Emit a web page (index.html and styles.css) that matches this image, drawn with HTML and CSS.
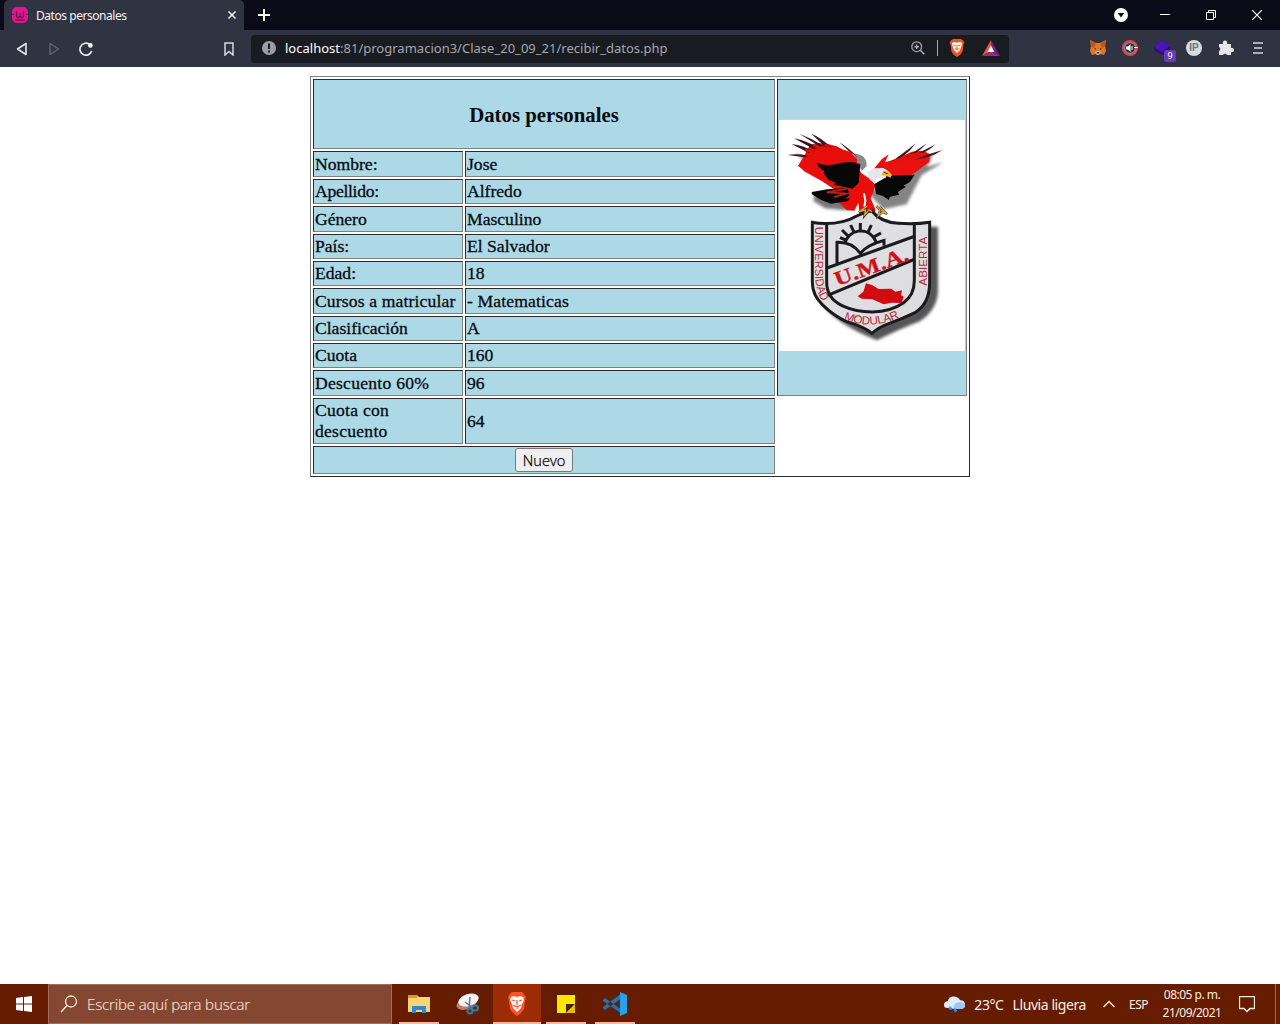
FILE: index.html
```
<!DOCTYPE html>
<html lang="es">
<head>
<meta charset="utf-8">
<title>Datos personales</title>
<link rel="stylesheet" href="styles.css">
</head>
<body>
<header class="tabs">
  <div class="tab">
    <svg width="16" height="16" viewBox="0 0 16 16"><rect width="16" height="16" rx="5" fill="#e4148c"/><path d="M0 7.500h2M14 7.500h2" stroke="#303341"/><path d="M4.500 4v5q0 1.500 1.500 1.500T8 9V6v3q.500 1.500 2 1.500t1.500-1.500V4M3.500 13h9" fill="none" stroke="#5c1750" stroke-width="1.300"/></svg>
    <span class="tab-title">Datos personales</span>
    <svg class="tab-close" width="10" height="10" viewBox="0 0 10 10"><path d="M1.500 1.500l7 7M8.500 1.500l-7 7" stroke="#fff" stroke-width="1.500"/></svg>
  </div>
  <svg class="new-tab" width="12" height="12" viewBox="0 0 12 12"><path d="M6 0v12M0 6h12" stroke="#fff" stroke-width="2"/></svg>
  <div class="window-controls">
    <svg width="14" height="14" viewBox="0 0 14 14"><circle cx="7" cy="7" r="7" fill="#fff"/><path d="M3.800 5h6.400L7 9.500z" fill="#0a0b16"/></svg>
    <svg width="10" height="10" viewBox="0 0 10 10"><path d="M0 4.500h10" stroke="#fff"/></svg>
    <svg width="10" height="10" viewBox="0 0 10 10"><path d="M.5 2.500h7v7h-7zM2.500 2.500v-2h7v7h-2" fill="none" stroke="#fff"/></svg>
    <svg width="10" height="10" viewBox="0 0 10 10"><path d="M0 0l10 10M10 0L0 10" stroke="#fff" stroke-width="1.200"/></svg>
  </div>
</header>
<nav class="toolbar">
  <svg class="back" width="12" height="14" viewBox="0 0 12 14"><path d="M10 1.500v11L1.500 7z" fill="none" stroke="#e4e5ea" stroke-width="1.600" stroke-linejoin="round"/></svg>
  <svg class="forward" width="12" height="14" viewBox="0 0 12 14"><path d="M2 1.500v11L10.500 7z" fill="none" stroke="#62656f" stroke-width="1.400" stroke-linejoin="round"/></svg>
  <svg class="reload" width="14" height="14" viewBox="0 0 14 14"><path d="M10 2a6 6 0 1 0 2.700 7" fill="none" stroke="#e4e5ea" stroke-width="1.700"/><circle cx="11.400" cy="3.400" r="2.300" fill="#fff"/></svg>
  <svg class="bookmark" width="10" height="14" viewBox="0 0 10 14"><path d="M1 1h8v12L5 9.500 1 13z" fill="none" stroke="#d7d8dd" stroke-width="1.500"/></svg>
  <div class="address">
    <svg width="14" height="14" viewBox="0 0 14 14"><circle cx="7" cy="7" r="7" fill="#9b9da4"/><path d="M7 2.500v5.500M7 9.500v2" stroke="#181b20" stroke-width="2"/></svg>
    <span class="url"><b>localhost</b>:81/programacion3/Clase_20_09_21/recibir_datos.php</span>
    <svg class="magnify" width="14" height="14" viewBox="0 0 14 14"><circle cx="5.700" cy="5.700" r="4.900" fill="none" stroke="#9ea0a5" stroke-width="1.300"/><path d="M9.300 9.300l4 4M3.500 5.700h4.400M5.700 3.500v4.400" stroke="#b0b1b6" stroke-width="1.400"/></svg>
    <i class="divider"></i>
    <svg class="shield" width="16" height="18" viewBox="0 0 16 18"><path d="M4 0h8l2 1.500 1.500 2-1 2-1 7-2 3L8 18l-3.500-2.500-2-3-1-7-1-2L2 1.500z" fill="#f05423"/><path d="M3 4l2-1 3 .7L11 3l2 1-.5 3-1.500 4-3 3-3-3-1.500-4z" fill="#fff"/><path d="M4.500 6l2.300.8M11.500 6l-2.300.8M8 6v4M5.500 9L8 11l2.500-2" stroke="#f05423" fill="none"/></svg>
    <svg class="bat" width="18" height="16" viewBox="0 0 18 16"><path d="M9 0L0 16l9-5z" fill="#f1543a"/><path d="M9 0l9 16-9-5z" fill="#652785"/><path d="M0 16h18l-9-5z" fill="#a62677"/><path d="M9 5.500L5.500 12h7z" fill="#fff"/></svg>
  </div>
  <div class="extensions">
    <svg width="16" height="16" viewBox="0 0 16 16"><path d="M0 0l6 3h4l6-3-1 6 1 5-2 4-4-1-1 1H7l-1-1-4 1-2-4 1-5z" fill="#dd7828"/><path d="M0 0l6 3-2 5-3-2zM16 0l-6 3 2 5 3-2z" fill="#bd561f"/><path d="M5 12l2-1h2l2 1-2 3H7z" fill="#d4c0ad"/><path d="M4 8l2 .500V10zM12 8l-2 .500V10zM7 12h2l.500 1.500h-3z" fill="#2a2930"/></svg>
    <svg width="16" height="16" viewBox="0 0 16 16"><circle cx="8" cy="8" r="7" fill="#888" stroke="#dc4450" stroke-width="2"/><circle cx="8" cy="8" r="4.800" fill="#32323a"/><path d="M4 6.500h2L8.500 4v8L6 9.500H4z" fill="#fff"/><path d="M10 6v4M12 7.500h4" stroke="#fff"/></svg>
    <div class="gem"><svg width="16" height="16" viewBox="0 0 16 16"><path d="M0 7l8-7 8 6v6l-8 3-8-5z" fill="#281371"/><path d="M0 7l8-7 8 6-8 6z" fill="#4815b8"/></svg><span class="badge">9</span></div>
    <div class="ip">IP</div>
    <svg width="16" height="16" viewBox="0 0 16 16"><path d="M1 4h4a2.300 2.300 0 1 1 4 0h4v4a2.200 2.200 0 1 1 0 4v3H9a2.200 2.200 0 0 0-4 0H1v-4a2.200 2.200 0 0 0 0-4z" fill="#e5e5ea"/></svg>
    <svg class="menu" width="12" height="12" viewBox="0 0 12 12"><path d="M1 1h10M2 6h8M1 11h10" stroke="#d3d4da" stroke-width="1.600"/></svg>
  </div>
</nav>
<main>
<table class="record">
  <colgroup><col class="label"><col class="value"><col class="crest-col"></colgroup>
  <tr class="heading"><th colspan="2"><span>Datos personales</span></th>
    <td class="crest" rowspan="10">
<svg width="188" height="234" viewBox="778 118 188 234">
  <defs>
    <filter id="soft" x="-20%" y="-20%" width="140%" height="140%"><feGaussianBlur stdDeviation="5"/></filter>
    <linearGradient id="metal" x2="1" y2="1"><stop stop-color="#e1e1e4"/><stop offset="1" stop-color="#dcdcdf"/></linearGradient>
    <path id="abierta" d="M457 227V72"/><path id="modular" d="M206 328Q292 364 385 317"/><path id="universidad" d="M120 50V185Q120 240 143 277"/>
  </defs>
  <path d="M778 119h188v232H778z" fill="#fff"/><path d="M778 119.500h188" stroke="#c9d3d6"/><path d="M778.500 119v232M965.500 119v232" stroke="#a4d5d8"/>
  <g transform="translate(775 75) scale(.33333)">
    <path d="M60 233l45 40 80 60 80 5 60 65 70-15 45-88 65-38-50 13 22-40-85 50-90 60z" fill="#555" opacity=".72" filter="url(#soft)"/>
    <path d="M118 358l-3 20 35 22 62 6 25-10-8-40z" fill="#777" filter="url(#soft)"/>
    <path d="M235 235q42 5 40 38l-15 15z" fill="#8a8a8e"/>
    <path d="M86 245L105 210l20-6 30 2 30 8 17 9 25 8 19 22 3 26 10 15 29 20 14 17-8 22-7 17 15 35-12 22-17 3-20-21-3-26-12 24-23-1-23-24-2-31-50-33-50-28-21-18z" fill="#e90e0b"/>
    <path d="M125 263q30 12 61 3 30-8 57-3l13 5-5 56-18 17-24-5-31-6 2-8-20-7-14-20 3-5-17-13zM110 351l47-8 61-4 5 22-13 10 15-2-7 10-50 7-31-12-26-16z" fill="#080708"/>
    <path d="M218 341l-63 11 57 3-35 11 47-12" stroke="#b9201c" stroke-width="5" fill="none"/>
    <path d="M296 282l24-29 21-15-11 24 35-11 45-21 30-3 25 10-2 24-20 14-23 18-24 12-64 8-24-13z" fill="#ea100d"/>
    <path d="M298 327l43-25 78-3-14 22-20 11 8 3-24 16 3 8-27 6-4 10-17-12-21-6z" fill="#090808"/>
    <path d="M38 240q30-5 60 2l-8 5zM50 207q35 4 65 22l-15 4zM57 190q45 10 75 30l-15 3zM73 176q40 15 75 38h-15zM109 176q30 12 62 43h-17zM193 202q30 18 55 45l-27-19zM352 258q40-10 70-53-22 19-70 53zM375 256q50-15 80-51-30 23-80 51zM395 254q55-15 87-46-40 20-87 46zM418 254q50-5 84-29-45 13-84 29z" fill="#3d141b"/>
    <path d="M95 242l60-3M90 225l65 15M115 210l50 30M150 208l30 30M360 256l70-15M400 240l55-5" stroke="#e90e0b" stroke-width="7"/>
    <path d="M276 293l20-13 29-1 15 9-9 22-26-2-5 15-15-8z" fill="#e7e7ed"/>
    <path d="M326 287l15 1 10 12-5 8-12-6-15-1z" fill="#efb440"/><path d="M326 292l12 4" stroke="#3b2924" stroke-width="3"/>
    <path d="M267 355l4 22-3 18" stroke="#fff" stroke-width="6" fill="none"/>
  </g>
  <g transform="translate(775 210) scale(.33333)">
    <path d="M160 65l-22 212Q182 343 306 391Q390 350 435 334Q490 296 489 238V50H430z" fill="#555" filter="url(#soft)"/>
    <path d="M108 37Q190 50 245 18Q278 3 291 3Q315 36 370 40Q420 44 464 37V217Q464 281 420 308Q385 325 343 340Q310 352 291 370Q267 350 215 335Q176 318 142 284Q112 255 112 217V37z" fill="url(#metal)" stroke="#1b1b1d" stroke-width="9"/>
    <path d="M155 43V217Q155 265 201 287Q241 306 292 306Q349 304 386 278Q418 256 418 211V43" fill="none" stroke="#1b1b1d" stroke-width="9"/>
    <path d="M156 174L421 78M158 256L420 147" stroke="#1b1b1d" stroke-width="9"/>
    <path d="M186 160V97Q230 95 256 130Q275 105 327 91v16M209 103C216 60 280 43 303 95M195 83l22 9M201 60l20 20M227 45l10 22M256 39v24M289 45l-9 20M318 69l-20 11" fill="none" stroke="#1b1b1d" stroke-width="9"/>
    <path d="M248 259l17-14 8-25 18 5 20 12 38-1 12 9 20-4-3 14 8 5-6 19-30-1-24 5-34-15-32-2z" fill="#d10b10"/>
    <text transform="translate(187 229) rotate(-20)" class="uma" textLength="232" lengthAdjust="spacingAndGlyphs">U.M.A.</text>
    <text class="motto"><textPath href="#universidad" textLength="228" lengthAdjust="spacingAndGlyphs">UNIVERSIDAD</textPath></text>
    <text class="motto"><textPath href="#modular" textLength="172">MODULAR</textPath></text>
    <text class="motto"><textPath href="#abierta" textLength="147">ABIERTA</textPath></text>
  </g>
  <g transform="translate(775 75) scale(.33333)">
    <path d="M276 395l-24 16 20-5-3 15 14-16 8 6M304 393l11 12-5 17 13-12 13 7-22-21" fill="none" stroke="#2d2319" stroke-width="7"/><path d="M276 394l-24 16 20-5-3 15 14-16 8 6M304 393l11 12-5 17 13-12 13 7-22-21" fill="none" stroke="#dca841" stroke-width="4"/>
  </g>
</svg></td></tr>
  <tr class="tall"><td>Nombre:</td><td>Jose</td></tr>
  <tr><td class="tight">Apellido:</td><td>Alfredo</td></tr>
  <tr class="tall"><td>Género</td><td>Masculino</td></tr>
  <tr><td>País:</td><td>El Salvador</td></tr>
  <tr><td>Edad:</td><td>18</td></tr>
  <tr class="tall"><td class="wide">Cursos a matricular</td><td class="wide">- Matematicas</td></tr>
  <tr><td>Clasificación</td><td>A</td></tr>
  <tr><td>Cuota</td><td>160</td></tr>
  <tr class="tall"><td class="wider">Descuento 60%</td><td>96</td></tr>
  <tr class="double"><td class="wider">Cuota con<br>descuento</td><td>64</td></tr>
  <tr class="action"><td colspan="2"><button>Nuevo</button></td></tr>
</table>
</main>
<footer class="taskbar">
  <svg class="start" width="16" height="16" viewBox="0 0 16 16"><path d="M0 2l7-1v6.500H0zM8 .900L16 0v7.500H8zM0 8.500h7V15l-7-1zM8 8.500h8V16l-8-1z" fill="#fff"/></svg>
  <div class="search"><svg width="18" height="18" viewBox="0 0 18 18"><circle cx="11" cy="6.500" r="5.500" fill="none" stroke="#fde4d8" stroke-width="1.300"/><path d="M7 10.500L1 17" stroke="#fde4d8" stroke-width="1.400"/></svg><span>Escribe aquí para buscar</span></div>
  <div class="apps">
    <div class="app running"><svg width="22" height="20" viewBox="0 0 22 20"><path d="M0 1h9l2 2h11v15H0z" fill="#f7d574"/><path d="M0 1h9l1 2-2 1H0z" fill="#d89a30"/><path d="M4 19v-7h14v7h-4v-3H8v3z" fill="#2c8ace"/></svg></div>
    <div class="app"><svg width="24" height="22" viewBox="0 0 24 22"><ellipse cx="11" cy="10" rx="11" ry="6" transform="rotate(-22 11 10)" fill="#c87872"/><ellipse cx="12.500" cy="7" rx="10.500" ry="6" transform="rotate(-18 12.500 7)" fill="#f4f4f6"/><path d="M14 4l-1 11M9 9l8 6" stroke="#657889" stroke-width="1.500"/><circle cx="14" cy="18" r="2.500" fill="none" stroke="#327fa6" stroke-width="2"/><ellipse cx="19" cy="15" rx="3" ry="2.500" fill="none" stroke="#327fa6" stroke-width="2"/></svg></div>
    <div class="app running active"><svg width="22" height="24" viewBox="0 0 22 24"><path d="M6 0h10l2 2 2 3-1 4-1 8-3 4-4 3-4-3-3-4-1-8-1-4 2-3z" fill="#fb542b"/><path d="M5 5l3-1 3 1 3-1 3 1 1 3-2 4-1 4-4 4-4-4-1-4-2-4z" fill="#fff"/><path d="M6 8l3 1M16 8l-3 1M11 8v5M7 13l4 2 4-2M11 15v2" stroke="#fb542b" stroke-width="1.300" fill="none"/></svg></div>
    <div class="app running note"><svg width="18" height="18" viewBox="0 0 18 18"><path d="M0 0h18v9L9 18H0z" fill="#ffe500"/><path d="M9 9h9l-9 9z" fill="#422516"/><path d="M18 9v9H9z" fill="#e9bd00"/></svg></div>
    <div class="app running"><svg width="24" height="24" viewBox="0 0 24 24"><path d="M0 8l2-2 17 12v4L0 9zM0 16l2 2L19 6V1L0 15z" fill="#1577c2"/><path d="M17 0l7 3v18l-7 3z" fill="#27a1eb"/></svg></div>
  </div>
  <div class="weather"><svg width="21" height="19" viewBox="0 0 22 19"><path d="M5 13Q0 14 0 10q0-4 4-4Q5 1 10 1t7 4q5 0 5 5 0 4-5 4H5z" fill="#dfedff"/><path d="M10 14q0-7 7-7 5 1 5 4t-5 3z" fill="#9bc8f4"/><path d="M6 11l-1 3q2 3 4 0zM11 13l-1 3q2 3 4 0z" fill="#278fdd"/></svg><span class="degrees">23°C</span><span class="rain">Lluvia ligera</span></div>
  <svg class="chevron" width="12" height="8" viewBox="0 0 12 8"><path d="M.5 7L6 1.500 11.500 7" fill="none" stroke="#ffe9df" stroke-width="1.400"/></svg>
  <span class="language">ESP</span>
  <div class="clock"><span>08:05 p. m.</span><span>21/09/2021</span></div>
  <svg class="notice" width="16" height="17" viewBox="0 0 16 17"><path d="M.5.500h15v12H11L8 15.500 5 12.500H.5z" fill="none" stroke="#fff0e7" stroke-width="1.300"/></svg>
  <i class="desktop"></i>
</footer>
</body>
</html>
```
FILE: styles.css
```
* { box-sizing: border-box; }
body { margin: 0; width: 1280px; height: 1024px; overflow: hidden; display: flex; flex-direction: column; background: #fff; font-family: "Noto Sans", sans-serif; }
svg { display: block; flex: none; }
span { white-space: nowrap; }

.tabs { height: 30px; flex: none; display: flex; align-items: center; padding-left: 4px; background: #0a0b16; }
.tab { width: 240px; height: 30px; display: flex; align-items: center; padding: 0 7px 0 8px; background: #303341; border-radius: 5px 5px 0 0; color: #f2f2f5; }
.tab-title { margin-left: 8px; font: 12px "Noto Sans", sans-serif; letter-spacing: -.45px; }
.tab-close { margin-left: auto; }
.new-tab { margin-left: 14px; }
.window-controls { margin-left: auto; display: flex; align-items: center; padding-right: 18px; gap: 36px; }
.window-controls svg:first-child { margin-right: -4px; }

.toolbar { height: 37px; flex: none; display: flex; align-items: center; background: #303341; padding: 0 16px; }
.forward { margin-left: 20px; }
.reload { margin-left: 19px; }
.bookmark { margin-left: 131px; }
.address { width: 758px; height: 28px; margin-left: 17px; display: flex; align-items: center; padding: 0 9px 1px 11px; background: #181b20; border-radius: 4px; }
.url { margin-left: 9px; color: #a5a7ad; font: 13px "Noto Sans", sans-serif; letter-spacing: .01px; }
.url b { color: #fff; font-weight: 400; }
.magnify { margin-left: auto; }
.divider { width: 1px; height: 16px; margin-left: 12px; background: #a7a8ad; }
.shield { margin-left: 11px; }
.bat { margin-left: 17px; }
.extensions { margin-left: auto; display: flex; align-items: center; gap: 16px; padding-bottom: 1px; }
.gem { position: relative; }
.badge { position: absolute; left: 10px; top: 10px; width: 12px; height: 12px; background: #6a39bd; border-radius: 2px; color: #fff; font: 9px/12px "Noto Sans", sans-serif; text-align: center; }
.ip { width: 16px; height: 16px; border-radius: 50%; background: #d9dcdf; color: #6b7279; font: bold 10px/16px "Liberation Sans", sans-serif; text-align: center; }
.menu { margin-left: 2px; }

main { flex: 1; padding-top: 9px; }
.record { width: 660px; table-layout: fixed; margin: 0 auto; border: 1px solid; border-color: #808080 #2b2b2b #2b2b2b #808080; border-spacing: 2px; font: 17.6px/21px "Liberation Serif", serif; color: #050b10; }
.label { width: 150px; }
.value { width: 310px; }
.crest-col { width: 190px; }
.record td, .record th { height: 25px; padding: 0 1px; background: #add8e6; border: 1px solid; border-color: #2b2b2b #808080 #808080 #2b2b2b; -webkit-text-stroke: .3px #050b10; }
.record .heading th { height: 70px; font-size: 20.8px; -webkit-text-stroke: 0; }
.record .tall td { height: 26px; }
.record .double td { height: 46px; }
.record .action td { height: 28px; text-align: center; }
.record .wide { letter-spacing: .14px; }
.record .wider { letter-spacing: .25px; }
.record .tight { letter-spacing: -.3px; }
.record .crest { padding: 0; vertical-align: middle; -webkit-text-stroke: 0; }
.crest svg { margin-top: -5px; }
.uma { font: bold 62px "Liberation Serif", serif; fill: #cf1219; stroke: #cf1219; stroke-width: 1px; }
.motto { font: 35px "Liberation Sans", sans-serif; fill: #b62b36; }
button { display: block; width: 58px; height: 24px; margin: 0 auto; padding: 0; border: 1px solid #777; border-radius: 3px; background: #efefef; color: #000; font: 300 14.6px/22px "Open Sans", sans-serif; -webkit-text-stroke: .25px #000; }

.taskbar { height: 40px; flex: none; display: flex; align-items: center; background: #651c00; color: #ffede4; }
.start { margin: 0 16px; }
.search { width: 344px; height: 40px; display: flex; align-items: center; padding-left: 11px; gap: 9px; background: #844832; border: 1px solid #a06b57; color: #fbdfd2; font: 300 15px "Open Sans", sans-serif; letter-spacing: -.12px; -webkit-text-stroke: .2px #fbdfd2; }
.apps { height: 40px; display: flex; margin-left: 2px; }
.app { width: 49px; height: 40px; display: flex; align-items: center; justify-content: center; background: linear-gradient(#ffb59d, #ffb59d) center bottom / 0 2px no-repeat; }
.running { background-size: 40px 2px; }
.active { background-color: #9b2c06; width: 48px; margin-left: 1px; background-size: 48px 2px; }
.weather { margin-left: auto; display: flex; align-items: center; font-size: 14px; letter-spacing: -.42px; }
.degrees { margin-left: 9px; }
.rain { margin-left: 9px; }
.chevron { margin-left: 17px; }
.language { margin-left: 14px; font-size: 12px; letter-spacing: -.5px; width: 20px; }
.clock { margin-left: 12px; width: 62px; display: flex; flex-direction: column; align-items: center; font-size: 12px; line-height: 18px; letter-spacing: -.5px; }
.notice { margin-left: 16px; }
.desktop { width: 1px; height: 40px; margin: 0 4px 0 20px; background: #9f6b57; }
```
